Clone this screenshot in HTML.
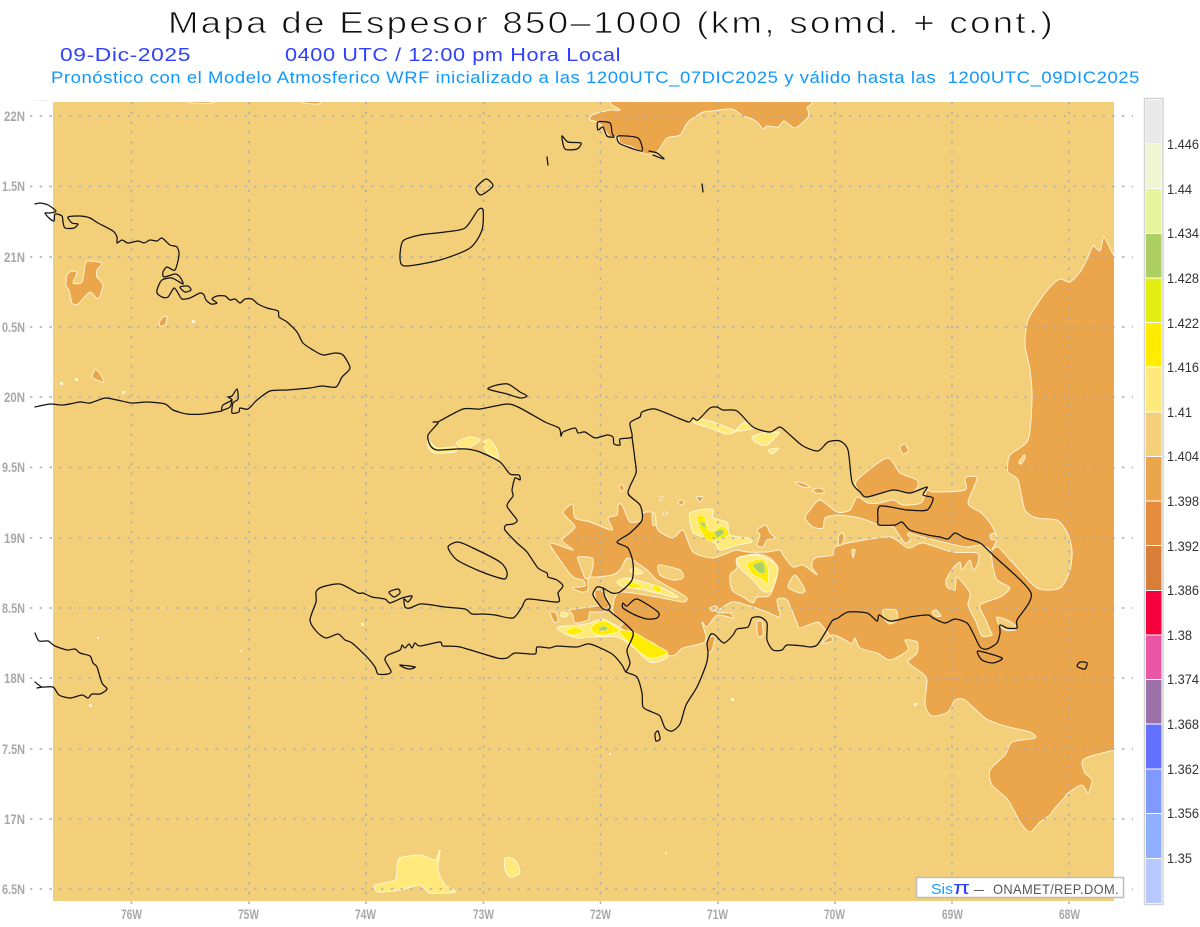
<!DOCTYPE html>
<html><head><meta charset="utf-8"><title>Mapa de Espesor</title>
<style>
html,body{margin:0;padding:0;background:#fff;width:1200px;height:927px;overflow:hidden}
svg{display:block}
text{font-family:"Liberation Sans",sans-serif;white-space:pre}
.o{fill:#eba54b;stroke:#fff3d2;stroke-width:1;stroke-linejoin:round}
.c{fill:#f3cf7a;stroke:#fff3d2;stroke-width:1;stroke-linejoin:round}
.l{fill:#ffe97a;stroke:#fff8d8;stroke-width:1;stroke-linejoin:round}
.y{fill:#ffec00;stroke:#fff8c0;stroke-width:.8;stroke-linejoin:round}
.g{fill:#abcf63;stroke:#e2ee60;stroke-width:1;stroke-linejoin:round}
.k{fill:none;stroke:#111;stroke-width:1.25;stroke-linejoin:round;stroke-linecap:round}
.ax{fill:#a8a8a8;font-weight:700;font-size:13.5px}
.lg{fill:#333;font-size:14px}
</style></head><body>
<svg width="1200" height="927" viewBox="0 0 1200 927" xmlns="http://www.w3.org/2000/svg">
<defs><clipPath id="m"><rect x="53" y="102" width="1061" height="799"/></clipPath></defs>
<rect width="1200" height="927" fill="#fff"/>
<text x="168" y="33" font-size="31" textLength="887" lengthAdjust="spacingAndGlyphs" letter-spacing="2" fill="#111" stroke="#fff" stroke-width=".75">Mapa de Espesor 850–1000 (km, somd. + cont.)</text>
<text x="60" y="61" font-size="18" textLength="131" lengthAdjust="spacingAndGlyphs" letter-spacing=".5" fill="#2f40ff">09-Dic-2025</text>
<text x="285" y="61" font-size="18" textLength="336" lengthAdjust="spacingAndGlyphs" letter-spacing=".5" fill="#2f40ff">0400 UTC / 12:00 pm Hora Local</text>
<text x="51" y="83" font-size="16.5" textLength="1089" lengthAdjust="spacingAndGlyphs" letter-spacing=".5" fill="#0f98ff">Pronóstico con el Modelo Atmosferico WRF inicializado a las 1200UTC_07DIC2025 y válido hasta las  1200UTC_09DIC2025</text>

<path d="M33 100.5H53" stroke="#f2f2f2" stroke-width="1" fill="none"/>
<rect x="53" y="102" width="1061" height="799" fill="#f3cf7a"/>
<g clip-path="url(#m)">
<!-- big orange -->
<path class="o" d="M1120 262L1114 256 1105 238 1103 238 1100 251 1093 246 1088 257 1080 272 1070 282 1060 279 1050 287 1040 300 1028 320 1025 345 1030 370 1032 400 1028 440 1010 455 1008 472 1018 480 1025 510 1037 518 1057 520 1067 532 1072 550 1070 570 1060 588 1037 588 1013 563 998 547 992 550 997 537 988 520 980 512 968 503 977 478 965 478 965 490 933 492 927 490 921 503 903 505 893 500 880 503 868 503 857 497 850 510 837 512 820 500 810 510 805 518 813 527 823 528 825 518 838 515 860 518 880 525 893 527 899 535 905 543 910 540 908 533 923 537 947 543 967 547 980 545 990 550 993 567 997 580 1010 588 1000 597 980 605 985 618 990 630 992 635 982 636 976 622 968 605 970 593 957 577 955 590 947 587 946 580 953 568 960 562 962 570 970 560 973 570 978 563 977 553 952 552 923 543 908 548 890 537 853 542 835 547 833 555 818 557 813 560 812 567 817 575 803 565 793 567 783 555 780 550 767 552 748 552 737 550 730 552 713 558 693 552 683 530 673 538 658 530 653 513 643 513 642 520 630 522 622 505 618 505 617 515 608 518 612 530 590 522 575 518 573 505 570 505 563 513 575 527 562 540 573 550 550 543 560 560 573 577 583 580 585 586 572 588 582 592 588 590 588 578 597 577 612 575 620 570 628 558 647 570 657 580 680 593 687 598 683 602 657 597 623 592 615 597 613 612 623 623 620 628 637 637 653 643 668 655 675 655 683 648 703 643 706 637 702 622 707 627 717 615 733 618 730 613 717 612 732 602 747 605 767 612 780 617 777 600 787 600 797 623 800 628 817 622 823 627 833 640 822 643 833 635 845 640 852 644 855 638 860 648 877 653 890 660 908 650 905 640 917 642 917 653 908 662 922 673 927 680 925 705 932 716 948 712 955 700 965 700 985 718 1005 726 1030 732 1035 738 1012 742 1005 755 990 770 992 785 1008 800 1020 822 1030 832 1040 822 1050 815 1055 808 1065 797 1068 793 1082 785 1088 793 1092 780 1085 773 1082 762 1088 757 1114 750 1120 748Z"/>
<!-- other orange -->
<path class="o" d="M857 480L887 458 900 473 917 480 917 488 910 493 893 490 867 497 858 490Z"/>
<path class="o" d="M620 100L620 110 610 110 592 115 590 120 598 122 603 127 610 137 618 136 620 143 632 147 645 154 657 152 667 138 680 135 688 122 703 112 712 111 732 109 743 116 750 118 758 123 763 129 767 126 778 127 784 121 795 128 808 117 807 108 800 100Z"/>
<path class="o" d="M67 275L72 271 77 273 73 283 82 282 85 265 88 261 102 263 97 270 97 277 103 285 98 299 90 292 78 304 72 303 69 290 66 286Z"/>
<path class="o" d="M159 323L163 317 167 317 165 325 160 326Z"/>
<path class="o" d="M92 377L95 370 99 372 104 382 97 380Z"/>
<path class="o" d="M189 100L192 103 212 103 214 100ZM301 100L305 103 318 104 321 100Z"/>
<path class="o" d="M795 482L803 483 810 487 802 487ZM813 490L818 488 824 490 823 493 816 493ZM900 447L905 444 908 451 903 454ZM839 535L843 533 844 540 840 546 838 542Z"/>
<path class="o" d="M757 530L766 525 770 533 775 538 767 540 763 547 757 545 760 535Z"/>
<path class="o" d="M550 612L556 613 558 621 554 622ZM570 610L590 607 607 605 603 612 590 612 588 620 575 623 573 615Z"/>
<path class="o" d="M595 590L603 592 610 605 603 608 596 600Z"/>
<path class="o" d="M707 640L715 636 712 650 708 652ZM757 622L762 622 763 635 758 636Z"/>
<path class="o" d="M660 497L663 497 660 501ZM680 500L684 501 682 505 678 503ZM696 497L703 497 700 502ZM619 486L623 485 624 490 621 491ZM664 512L668 513 663 515Z"/>
<!-- cream holes -->
<path class="c" d="M659 565L680 570 683 578 673 580 660 575Z"/>
<path class="c" d="M578 557L592 558 593 565 590 577 585 578 580 565Z"/>
<path class="c" d="M652 515L655 514 656 524 653 525Z"/>
<path class="c" d="M710 608L716 606 718 610 712 611Z"/>
<path class="c" d="M788 587L795 575 805 590 800 593Z"/>
<path class="c" d="M997 617L1007 620 1015 625 1015 630 1005 630 998 623Z"/>
<path class="c" d="M932 612L936 610 941 616 935 616Z"/>
<path class="c" d="M883 610L896 610 897 620 890 624 885 620Z"/>
<path class="c" d="M852 550L855 550 853 558Z"/>
<path class="c" d="M1019 462L1024 455 1025 458 1021 464Z"/>
<path class="c" d="M990 535L995 533 997 538 992 540Z"/>
<path class="c" d="M737 558L757 554 770 558 778 570 770 595 757 597 753 603 743 597 732 590 730 575 737 568Z"/>
<!-- light yellow -->
<path class="l" d="M558 627L580 625 590 623 603 619 620 628 637 637 653 643 668 655 663 660 650 662 633 647 617 637 590 637 577 638 563 633Z"/>
<path class="l" d="M617 582L627 578 647 583 667 590 678 597 672 597 657 593 633 588 623 587Z"/>
<path class="l" d="M630 570L636 568 643 573 634 574Z"/>
<path class="l" d="M690 513L712 509 713 518 727 522 730 535 748 538 752 542 738 545 720 550 715 543 703 537 693 532Z"/>
<path class="l" d="M738 558L757 555 770 560 778 568 772 590 763 591 753 580 740 568Z"/>
<path class="l" d="M690 421L700 419 713 422 735 431 727 434 715 430Z"/>
<path class="l" d="M736 431L745 422 753 428Z"/>
<path class="l" d="M752 437L763 433 777 432 779 433 767 445 757 443Z"/>
<path class="l" d="M768 450L777 448 778 449 772 454Z"/>
<path class="l" d="M428 440L437 448 455 447 455 452 435 453 429 448Z"/>
<path class="l" d="M457 442L470 437 480 440 468 448 460 447Z"/>
<path class="l" d="M483 442L490 440 497 450 498 458 487 452Z"/>
<path class="l" d="M400 858L420 855 435 860 440 850 438 870 445 885 455 892 430 893 420 885 400 890 378 892 375 885 395 880 397 868Z"/>
<path class="l" d="M505 858L515 860 520 873 510 877 505 870Z"/>
<path class="l" d="M562 612L568 614 566 617 561 616Z"/>
<!-- yellow -->
<path class="y" d="M566 632L573 627 584 631 573 635ZM591 628L598 622 608 622 619 631 605 635 595 634ZM619 631L633 632 654 644 668 653 650 658 636 649ZM626 582L633 582 643 587 630 588ZM652 585L660 587 661 592 655 591ZM697 516L705 517 708 529 713 531 722 526 728 530 728 536 713 541 706 539 699 528ZM747 563L762 559 768 567 768 584 762 579 752 574Z"/>
<path class="g" d="M600 627L605 626 608 629 603 631ZM699 522L705 523 705 528ZM715 532L722 529 724 533 717 538ZM753 565L763 562 765 573 758 572Z"/>
<!-- small specks -->
<g fill="#fff3d2"><rect x="89" y="704" width="3" height="3"/><rect x="60" y="382" width="3" height="3"/><rect x="75" y="378" width="3" height="3"/><rect x="122" y="391" width="3" height="3"/><rect x="192" y="320" width="3" height="3"/><rect x="361" y="623" width="3" height="3"/><rect x="97" y="637" width="2" height="2"/><rect x="240" y="650" width="2" height="2"/><rect x="914" y="703" width="3" height="3"/><rect x="731" y="698" width="3" height="3"/><rect x="609" y="753" width="2" height="2"/><rect x="665" y="852" width="2" height="2"/></g>
</g>
<!-- grid -->
<g stroke="#a9adb0" stroke-width="1.6" stroke-dasharray="2.4 7.35" fill="none">
<path d="M30 116H1133M30 186.5H1133M30 257H1133M30 327H1133M30 397H1133M30 467.5H1133M30 538H1133M30 608H1133M30 678H1133M30 749H1133M30 819H1133M30 889H1133"/>
<path d="M131.5 102V906M249 102V906M366 102V906M483.5 102V906M600.5 102V906M718 102V906M835 102V906M952 102V906M1069 102V906"/>
</g>
<!-- coast -->
<g class="k">
<path class="k" d="M35 204L40 203 48 205 56 211 50 213 45 213 49 218 54 221 55 214 62 216 63 222 65 228 74 228 78 224 72 223 68 217 80 216 90 218 98 223 113 231 117 237 117 243 122 240 128 243 138 241 144 243 150 240 157 241 162 238 170 245 177 247 179 255 175 270 167 267 163 272 164 277 175 274 180 277 183 284 172 278 162 280 158 287 157 293 162 297 168 297 174 288 178 293 182 299 190 298 200 293 204 295 206 300 211 304 217 303 212 299 217 296 225 296 230 300 235 299 240 303 245 299 252 299 258 304 267 308 278 311 279 317 287 322 297 332 303 343 313 350 323 355 335 353 343 355 350 368 342 377 336 387 322 386 310 388 287 390 270 391 257 400 248 409 240 408 239 412 232 413 233 403 238 399 237 389 232 396 228 397 232 400 223 405 222 410 230 407 232 400M222 411L203 414 187 414 173 410 165 404 147 402 132 403 117 400 105 398 90 403 80 402 63 405 50 404 35 407"/>
<path class="k" d="M180 287L188 286 191 290 185 292Z"/>
<path class="k" d="M35 633L39 641 48 641 55 646 67 650 75 649 80 653 90 656 93 663 97 667 102 683 107 689 100 694 92 694 88 698 82 695 70 698 59 695 53 687 42 687 35 682M42 687L37 688"/>
<path class="k" d="M438 422L433 422 438 423 428 435 430 445 437 450 457 449 467 449 480 452 500 462 510 474 519 475 520 480 515 478 512 490 513 496 507 506 517 520 513 524 506 525 505 530 517 543 527 552 538 568 547 573 548 577 557 580 563 586 558 593 558 602 528 599 522 607 513 618 495 615 483 614 472 614 465 609 445 607 432 605 420 604 410 608 405 607 404 599 408 602 412 596 402 598 390 603 385 599 372 597 363 593 358 593 340 584 322 587 316 592 316 602 310 620 317 632 326 638 338 634 345 640 352 643 367 657 375 667 378 674 388 674 391 671 385 660 388 655 400 650 402 645 405 648 409 644 412 648 415 643 420 646 440 642 443 646 460 647 497 658 507 658 515 653 535 654 537 647 550 648 557 646 577 647 590 644 612 654 622 665 626 672 637 677 642 693 643 707 652 712 660 716 665 728 672 731 680 724 686 705 697 687 706 665 708 653 707 643 711 634 715 635 724 643 733 635 737 629 748 627 752 618 760 617 767 623 767 640 773 650 782 650 787 645 803 646 810 647 817 645 825 633 832 621 838 618 848 612 867 613 877 621 879 615 887 620 893 621 910 617 928 615 933 618 945 623 955 619 967 623 973 633 980 647 987 649 997 643 1000 633 1000 625 1007 628 1017 628 1017 620 1031 593 993 555 980 543 965 538 955 533 948 539 940 537 928 535 910 530 902 522 895 525 879 525 878 520 880 506 907 510 927 510 933 498 923 495 927 487 910 493 893 490 867 497 860 492 852 482 848 450 840 441 828 442 818 451 803 446 790 435 780 427 770 432 753 427 737 411 723 410 717 407 710 408 698 420 693 418 689 422 678 418 655 409 642 412 640 417 630 423 632 437 620 439 620 445 614 444 613 437 607 435 595 438 585 432 578 433 575 428 563 432 561 436 559 428 545 422 520 408 507 404 480 409 463 409 438 422"/>
<path class="k" d="M632 437L635 460 636 473 628 493 640 505 642 520 630 533 617 542 628 548 633 563 632 580 620 592 612 593 603 588 597 587 593 595 602 608 608 610 610 606 605 597 603 588M608 610L612 613 633 632 627 650 630 663 626 672"/>
<path class="k" d="M488 389L497 385 508 384 520 392 527 396 520 398 507 394Z"/>
<path class="k" d="M448 547L458 542 473 548 500 562 507 572 504 579 482 572 457 560Z"/>
<path class="k" d="M389 592L398 589 400 593 394 597Z"/>
<path class="k" d="M400 665L415 667 410 669 405 668Z"/>
<path class="k" d="M623 603L627 606 637 599 658 612 657 618 647 619 635 615 623 608Z"/>
<path class="k" d="M978 651L1002 658 993 663 982 660Z"/>
<path class="k" d="M1077 666L1080 662 1087 663 1085 669 1080 668Z"/>
<path class="k" d="M655 734L658 731 660 739 656 741Z"/>
<path class="k" d="M562 136L568 142 581 143 577 149 565 149Z"/>
<path class="k" d="M598 122L610 123 612 133 614 137 607 136 603 127 598 130Z"/>
<path class="k" d="M618 136L638 138 642 151 628 147 619 143Z"/>
<path class="k" d="M649 151L657 153 664 159 653 155"/>
<path class="k" d="M702 184L703 192M547 157L548 165"/>
<path class="k" d="M476 188L486 179 493 186 481 195Z"/>
<path class="k" d="M403 241L420 235 445 232 465 228 478 210 483 210 482 230 470 248 440 260 405 266 400 258Z"/>
</g>
<!-- axis labels -->
<g class="ax" text-anchor="end">
<text x="25" y="121" textLength="21" lengthAdjust="spacingAndGlyphs">22N</text>
<text x="25" y="191" textLength="23" lengthAdjust="spacingAndGlyphs">1.5N</text>
<text x="25" y="262" textLength="21" lengthAdjust="spacingAndGlyphs">21N</text>
<text x="25" y="332" textLength="23" lengthAdjust="spacingAndGlyphs">0.5N</text>
<text x="25" y="402" textLength="21" lengthAdjust="spacingAndGlyphs">20N</text>
<text x="25" y="472" textLength="23" lengthAdjust="spacingAndGlyphs">9.5N</text>
<text x="25" y="543" textLength="21" lengthAdjust="spacingAndGlyphs">19N</text>
<text x="25" y="613" textLength="23" lengthAdjust="spacingAndGlyphs">8.5N</text>
<text x="25" y="683" textLength="21" lengthAdjust="spacingAndGlyphs">18N</text>
<text x="25" y="754" textLength="23" lengthAdjust="spacingAndGlyphs">7.5N</text>
<text x="25" y="824" textLength="21" lengthAdjust="spacingAndGlyphs">17N</text>
<text x="25" y="894" textLength="23" lengthAdjust="spacingAndGlyphs">6.5N</text>
</g>
<g class="ax">
<text x="121" y="919" textLength="21" lengthAdjust="spacingAndGlyphs">76W</text>
<text x="238" y="919" textLength="21" lengthAdjust="spacingAndGlyphs">75W</text>
<text x="355" y="919" textLength="21" lengthAdjust="spacingAndGlyphs">74W</text>
<text x="473" y="919" textLength="21" lengthAdjust="spacingAndGlyphs">73W</text>
<text x="590" y="919" textLength="21" lengthAdjust="spacingAndGlyphs">72W</text>
<text x="707" y="919" textLength="21" lengthAdjust="spacingAndGlyphs">71W</text>
<text x="824" y="919" textLength="21" lengthAdjust="spacingAndGlyphs">70W</text>
<text x="942" y="919" textLength="21" lengthAdjust="spacingAndGlyphs">69W</text>
<text x="1059" y="919" textLength="21" lengthAdjust="spacingAndGlyphs">68W</text>
</g>
<!-- logo box -->
<rect x="916.5" y="877.5" width="207" height="20" fill="#fff" stroke="#bdbdbd" stroke-width="1.5"/>
<text x="931" y="894" font-size="15" textLength="22" lengthAdjust="spacingAndGlyphs" fill="#1a9cff">Sis</text>
<text x="953" y="894" font-size="18" textLength="17" lengthAdjust="spacingAndGlyphs" fill="#2a40ff">π</text>
<text x="974" y="894" font-size="14" textLength="10" lengthAdjust="spacingAndGlyphs" fill="#555">–</text>
<text x="993" y="894" font-size="14" textLength="126" lengthAdjust="spacingAndGlyphs" letter-spacing=".4" fill="#555">ONAMET/REP.DOM.</text>
<!-- legend -->
<rect x="1144.5" y="98.5" width="18.5" height="806" fill="#fff" stroke="#d2d2d2" stroke-width="1.5"/>
<rect x="1146" y="100" width="15.5" height="43.5" fill="#e9e9e9"/>
<rect x="1146" y="144" width="15.5" height="44" fill="#eff5d0"/>
<rect x="1146" y="189" width="15.5" height="44" fill="#e6f49e"/>
<rect x="1146" y="234" width="15.5" height="43.5" fill="#abcf63"/>
<rect x="1146" y="278.5" width="15.5" height="43.5" fill="#e2ee11"/>
<rect x="1146" y="323" width="15.5" height="43.5" fill="#ffec00"/>
<rect x="1146" y="367.5" width="15.5" height="44" fill="#ffe97a"/>
<rect x="1146" y="412.5" width="15.5" height="43.5" fill="#f3cf7a"/>
<rect x="1146" y="457" width="15.5" height="43.5" fill="#eba54b"/>
<rect x="1146" y="501.5" width="15.5" height="43.5" fill="#e58d3c"/>
<rect x="1146" y="546" width="15.5" height="44" fill="#d87d3a"/>
<rect x="1146" y="591" width="15.5" height="43.5" fill="#f5003c"/>
<rect x="1146" y="635.5" width="15.5" height="43.5" fill="#e956a3"/>
<rect x="1146" y="680" width="15.5" height="43.5" fill="#9c70a8"/>
<rect x="1146" y="724.5" width="15.5" height="44" fill="#6470ff"/>
<rect x="1146" y="769.5" width="15.5" height="43.5" fill="#7f99ff"/>
<rect x="1146" y="814" width="15.5" height="44" fill="#8fb0ff"/>
<rect x="1146" y="859" width="15.5" height="44" fill="#b8c8ff"/>
<g class="lg">
<text x="1167" y="149" textLength="32" lengthAdjust="spacingAndGlyphs">1.446</text>
<text x="1167" y="194" textLength="25" lengthAdjust="spacingAndGlyphs">1.44</text>
<text x="1167" y="238" textLength="32" lengthAdjust="spacingAndGlyphs">1.434</text>
<text x="1167" y="283" textLength="32" lengthAdjust="spacingAndGlyphs">1.428</text>
<text x="1167" y="328" textLength="32" lengthAdjust="spacingAndGlyphs">1.422</text>
<text x="1167" y="372" textLength="32" lengthAdjust="spacingAndGlyphs">1.416</text>
<text x="1167" y="417" textLength="25" lengthAdjust="spacingAndGlyphs">1.41</text>
<text x="1167" y="461" textLength="32" lengthAdjust="spacingAndGlyphs">1.404</text>
<text x="1167" y="506" textLength="32" lengthAdjust="spacingAndGlyphs">1.398</text>
<text x="1167" y="551" textLength="32" lengthAdjust="spacingAndGlyphs">1.392</text>
<text x="1167" y="595" textLength="32" lengthAdjust="spacingAndGlyphs">1.386</text>
<text x="1167" y="640" textLength="25" lengthAdjust="spacingAndGlyphs">1.38</text>
<text x="1167" y="684" textLength="32" lengthAdjust="spacingAndGlyphs">1.374</text>
<text x="1167" y="729" textLength="32" lengthAdjust="spacingAndGlyphs">1.368</text>
<text x="1167" y="774" textLength="32" lengthAdjust="spacingAndGlyphs">1.362</text>
<text x="1167" y="818" textLength="32" lengthAdjust="spacingAndGlyphs">1.356</text>
<text x="1167" y="863" textLength="25" lengthAdjust="spacingAndGlyphs">1.35</text>
</g>
</svg>
<script>
document.querySelectorAll('path.o,path.c,path.l,path.y,path.g,path.k').forEach(function(p){
  var out='';
  p.getAttribute('d').split('M').forEach(function(s){
    if(!s.trim())return;
    var z=/Z/.test(s),n=s.replace(/[LZ]/g,' ').trim().split(/\s+/).map(Number),P=[],i;
    for(i=0;i+1<n.length;i+=2)P.push([n[i],n[i+1]]);
    if(P.length<3){out+='M'+s;return;}
    var L=P.length,m=z?L:L-1,t=0.75/6;
    out+='M'+P[0][0]+' '+P[0][1];
    for(i=0;i<m;i++){
      var a=z?P[(i-1+L)%L]:P[Math.max(i-1,0)],b=P[i],c=P[(i+1)%L],d=z?P[(i+2)%L]:P[Math.min(i+2,L-1)];
      out+='C'+(b[0]+(c[0]-a[0])*t).toFixed(1)+' '+(b[1]+(c[1]-a[1])*t).toFixed(1)+' '+(c[0]-(d[0]-b[0])*t).toFixed(1)+' '+(c[1]-(d[1]-b[1])*t).toFixed(1)+' '+c[0]+' '+c[1];
    }
    if(z)out+='Z';
  });
  p.setAttribute('d',out);
});
</script>
</body></html>
